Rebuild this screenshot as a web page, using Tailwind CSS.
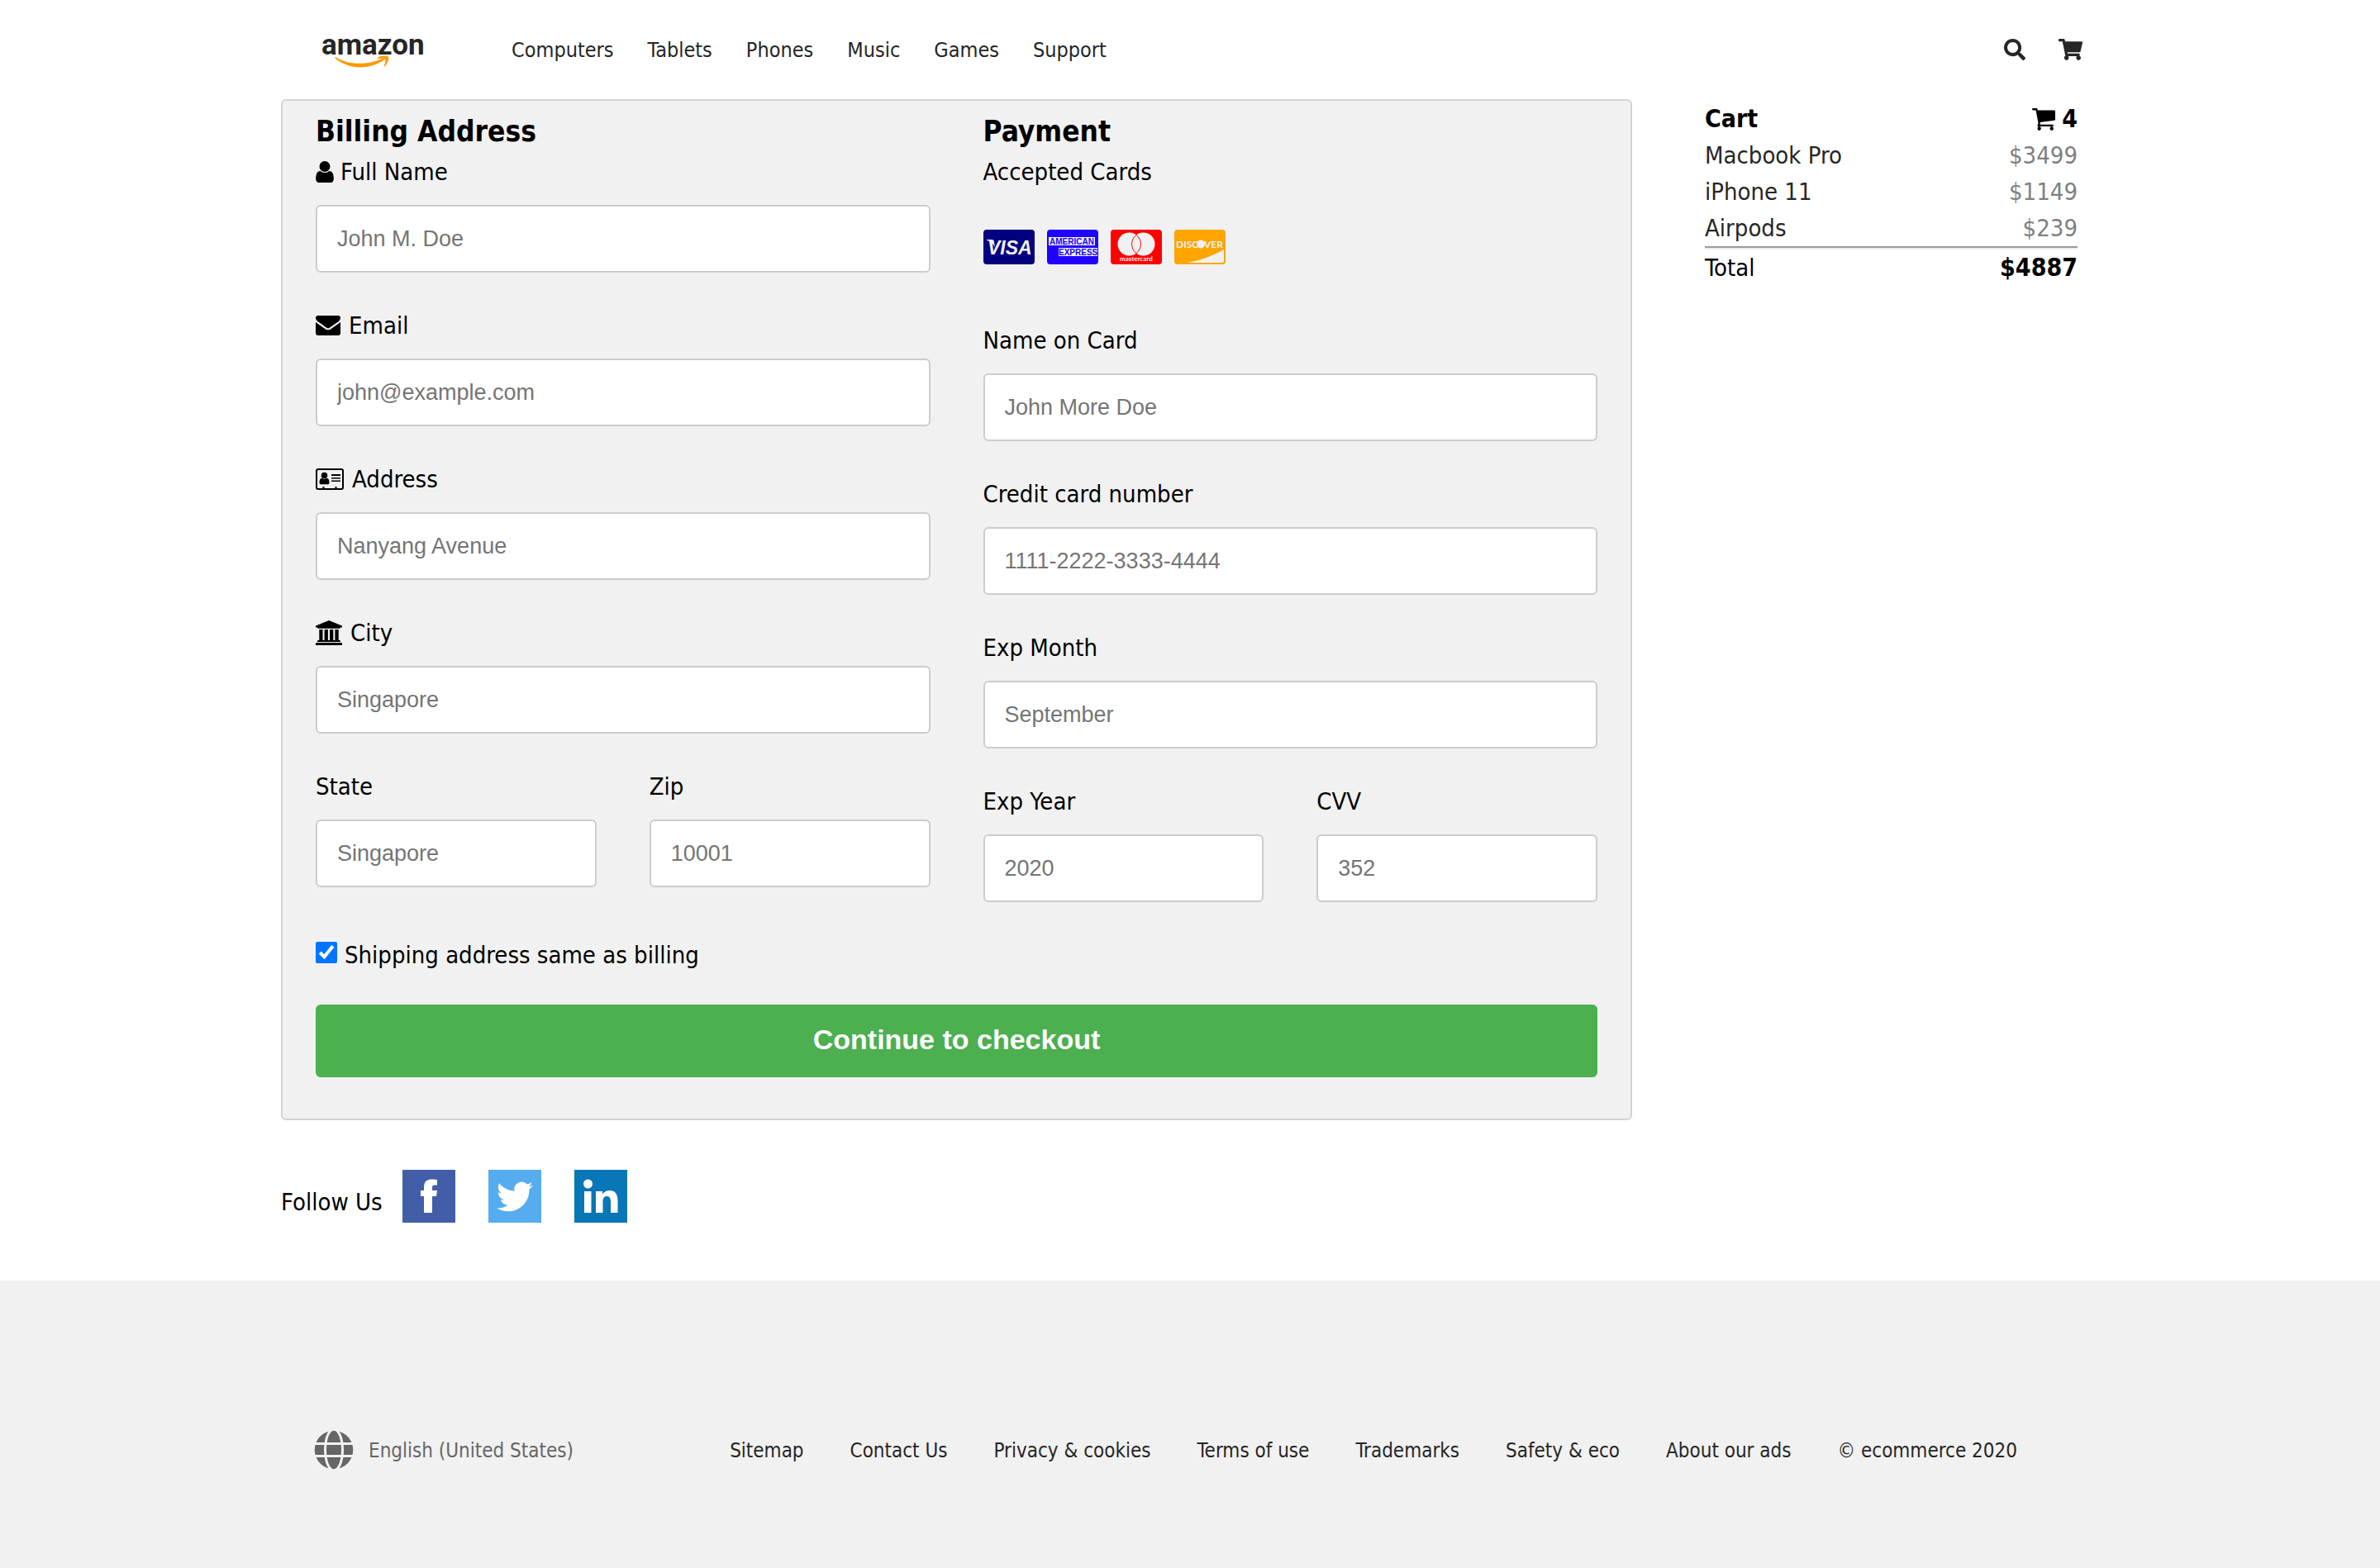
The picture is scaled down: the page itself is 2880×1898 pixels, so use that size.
<!DOCTYPE html>
<html lang="en">
<head>
<meta charset="utf-8">
<meta name="viewport" content="width=device-width, initial-scale=1">
<title>Checkout</title>
<script src="https://cdn.jsdelivr.net/npm/@tailwindcss/browser@4"></script>
</head>
<body class="flex min-h-screen flex-col bg-white font-['DejaVu_Sans_Condensed','Noto_Sans',sans-serif] text-[29px] leading-10 text-black">

<header class="mx-auto flex h-[120px] w-full max-w-[2200px] items-center pr-5 pl-12 text-[25px] text-[#262626]">
  <a href="#" aria-label="amazon" class="mr-[103px]">
    <svg class="h-[60px] w-32" viewBox="0 0 128 60">
      <text x="1" y="36" font-family="Roboto, sans-serif" font-weight="700" font-size="35" fill="#262626">amazon</text>
      <path d="M18 39C31 48 54 50 75 41c2-1 3 1 1 2C58 55 34 54 18 41c-1-1-1-2 0-2z" fill="#f90"/>
      <path d="M69 40c4-3 11-3 13-1 1 2-1 8-4 11-1 1-2 0-1-1 1-2 2-6 1-7-1-2-5-1-8-1-2 0-2 0-1-1z" fill="#f90"/>
    </svg>
  </a>
  <nav class="flex gap-[41px] pt-0.5">
    <a href="#">Computers</a>
    <a href="#">Tablets</a>
    <a href="#">Phones</a>
    <a href="#">Music</a>
    <a href="#">Games</a>
    <a href="#">Support</a>
  </nav>
  <div class="ml-auto flex items-center gap-10">
    <button type="button" aria-label="Search">
      <svg class="size-[26px]" viewBox="0 0 512 512" fill="currentColor"><path d="M505 442.700L405.300 343c-4.500-4.500-10.600-7-17-7H372c27.600-35.300 44-79.700 44-128C416 93.100 322.900 0 208 0S0 93.100 0 208s93.100 208 208 208c48.300 0 92.700-16.400 128-44v16.300c0 6.400 2.500 12.500 7 17l99.700 99.700c9.400 9.400 24.600 9.400 33.900 0l28.300-28.300c9.400-9.400 9.400-24.600.1-34zM208 336c-70.700 0-128-57.200-128-128 0-70.700 57.200-128 128-128 70.700 0 128 57.200 128 128 0 70.700-57.200 128-128 128z"/></svg>
    </button>
    <a href="#" aria-label="Shopping cart">
      <svg class="h-[26px] w-[29px]" viewBox="0 0 576 512" fill="currentColor"><path d="M528.120 301.319l47.273-208C578.806 78.301 567.391 64 551.990 64H159.208l-9.166-44.810C147.758 8.021 137.930 0 126.529 0H24C10.745 0 0 10.745 0 24v16c0 13.255 10.745 24 24 24h69.883l70.248 343.435C147.325 417.100 136 435.222 136 456c0 30.928 25.072 56 56 56s56-25.072 56-56c0-15.674-6.447-29.835-16.824-40h209.647C430.447 426.165 424 440.326 424 456c0 30.928 25.072 56 56 56s56-25.072 56-56c0-22.172-12.888-41.332-31.579-50.405l5.517-24.276c3.413-15.018-8.002-29.319-23.403-29.319H218.117l-6.545-32h293.145c11.206 0 20.920-7.754 23.403-18.681z"/></svg>
    </a>
  </div>
</header>

<main class="mx-auto w-full max-w-[2200px]">
  <div class="flex items-start gap-[88px] pr-[26px]">
    <form class="flex-1 rounded-md border-2 border-[#d3d3d3] bg-[#f1f1f1] px-10 pt-3 pb-[50px]">
      <div class="grid grid-cols-2 gap-x-16">
        <section>
          <h3 class="mb-1 text-[35px] leading-[50px] font-bold">Billing Address</h3>
          <label for="fname" class="mb-5 flex items-center gap-2">
            <svg class="h-[26px] w-[22px]" viewBox="256 128 1280 1536"><path d="M1536 1399q0 109-62.500 187t-150.500 78h-854q-88 0-150.500-78t-62.500-187q0-85 8.500-160.500t31.500-152 58.500-131 94-89 134.500-34.500q131 128 313 128t313-128q76 0 134.500 34.500t94 89 58.500 131 31.500 152 8.500 160.500zm-256-887q0 159-112.500 271.500t-271.500 112.500-271.500-112.500-112.500-271.500 112.500-271.500 271.500-112.500 271.500 112.500 112.500 271.500z"/></svg>
            Full Name
          </label>
          <input id="fname" type="text" placeholder="John M. Doe" class="mb-11 block h-[82px] w-full rounded-md border-2 border-[#ccc] bg-white px-6 font-['Liberation_Sans',sans-serif] text-[27px] placeholder:text-[#757575]">

          <label for="email" class="mb-5 flex items-center gap-[10px]">
            <svg class="h-6 w-[30px]" viewBox="0 256 1792 1408" preserveAspectRatio="none"><path d="M1792 710v794q0 66-47 113t-113 47h-1472q-66 0-113-47t-47-113v-794q44 49 101 87 362 246 497 345 57 42 92.500 65.500t94.500 48 110 24.500h2q51 0 110-24.500t94.500-48 92.500-65.500q170-123 498-345 57-39 100-87zm0-294q0 79-49 151t-122 123q-376 261-468 325-10 7-42.500 31t-54 38.500-52 32.500-57.500 27-50 9h-2q-23 0-50-9t-57.500-27-52-32.500-54-38.500-42.500-31q-91-64-262-182.500t-205-142.500q-62-42-117-115.500t-55-136.500q0-78 41.500-130t118.500-52h1472q65 0 112.500 47t47.500 113z"/></svg>
            Email
          </label>
          <input id="email" type="email" placeholder="john@example.com" class="mb-11 block h-[82px] w-full rounded-md border-2 border-[#ccc] bg-white px-6 font-['Liberation_Sans',sans-serif] text-[27px] placeholder:text-[#757575]">

          <label for="adr" class="mb-5 flex items-center gap-[10px]">
            <svg class="h-[26px] w-[34px]" viewBox="0 0 34 26">
              <rect x="1" y="1" width="32" height="24" rx="2" fill="none" stroke="#000" stroke-width="2"/>
              <circle cx="10.500" cy="8.500" r="3.800"/>
              <path d="M4.500 17c0-3 1-5.300 3.200-5.300 1.700 1.400 3.900 1.400 5.600 0 2.200 0 3.200 2.300 3.200 5.300 0 1.500-.8 2.300-2 2.300h-8c-1.200 0-2-.8-2-2.300zM19 7h11v2H19zM19 11h11v1.500H19zM19 14.500h11v1.500H19zM8.500 22h2v3h-2zM23.500 22h2v3h-2z"/>
            </svg>
            Address
          </label>
          <input id="adr" type="text" placeholder="Nanyang Avenue" class="mb-11 block h-[82px] w-full rounded-md border-2 border-[#ccc] bg-white px-6 font-['Liberation_Sans',sans-serif] text-[27px] placeholder:text-[#757575]">

          <label for="city" class="mb-5 flex items-center gap-[10px]">
            <svg class="h-[30px] w-8" viewBox="0 0 32 30"><path d="M16 0l16 6.500v2h-2c0 .7-.5 1.200-1.200 1.200H3.200C2.500 9.700 2 9.200 2 8.500H0v-2zM4.300 11h4.200v13h2.100V11h4.300v13H17V11h4.300v13h2.100V11h4.300v13h1c.7 0 1.200.5 1.200 1.100V26H2v-.9C2 24.500 2.500 24 3.200 24h1.100zM1.200 27h29.600c.7 0 1.200.5 1.200 1.100V30H0v-1.900C0 27.500.5 27 1.200 27z"/></svg>
            City
          </label>
          <input id="city" type="text" placeholder="Singapore" class="mb-11 block h-[82px] w-full rounded-md border-2 border-[#ccc] bg-white px-6 font-['Liberation_Sans',sans-serif] text-[27px] placeholder:text-[#757575]">

          <div class="grid grid-cols-2 gap-x-16">
            <div>
              <label for="state" class="mb-5 block">State</label>
              <input id="state" type="text" placeholder="Singapore" class="block h-[82px] w-full rounded-md border-2 border-[#ccc] bg-white px-6 font-['Liberation_Sans',sans-serif] text-[27px] placeholder:text-[#757575]">
            </div>
            <div>
              <label for="zip" class="mb-5 block">Zip</label>
              <input id="zip" type="text" placeholder="10001" class="block h-[82px] w-full rounded-md border-2 border-[#ccc] bg-white px-6 font-['Liberation_Sans',sans-serif] text-[27px] placeholder:text-[#757575]">
            </div>
          </div>
        </section>

        <section>
          <h3 class="mb-1 text-[35px] leading-[50px] font-bold">Payment</h3>
          <p>Accepted Cards</p>
          <div class="mt-[50px] mb-[72px] flex gap-[15px]">
            <svg class="h-[42px] w-[62px]" viewBox="0 0 62 42" role="img" aria-label="Visa">
              <rect width="62" height="42" rx="4" fill="navy"/>
              <text x="5" y="30" font-family="Liberation Sans, sans-serif" font-weight="700" font-style="italic" font-size="23" fill="#f1f1f1">VISA</text>
              <path d="M3 12h7c2 0 3 1 3 3l1 6c-2-4-6-7-11-9z" fill="#f1f1f1"/>
            </svg>
            <svg class="h-[42px] w-[62px]" viewBox="0 0 62 42" role="img" aria-label="American Express">
              <rect width="62" height="42" rx="4" fill="#2000ff"/>
              <path d="M2 9h56v10H2zM14 22h47v10H14z" fill="#f1f1f1"/>
              <g font-family="Liberation Sans, sans-serif" font-weight="700" font-size="10" fill="#2000ff">
                <text x="3" y="18">AMERICAN</text>
                <text x="14" y="31">EXPRESS</text>
              </g>
            </svg>
            <svg class="h-[42px] w-[62px]" viewBox="0 0 62 42" role="img" aria-label="Mastercard">
              <rect width="62" height="42" rx="4" fill="red"/>
              <circle cx="22.500" cy="17.500" r="14" fill="#f1f1f1"/>
              <circle cx="39.500" cy="17.500" r="14" fill="#f1f1f1"/>
              <path d="M31 6.400a14 14 0 010 22.200a14 14 0 010-22.200z" fill="#f1f1f1" stroke="red"/>
              <text x="11" y="38" font-family="Lato, sans-serif" font-weight="700" font-size="8" fill="#f1f1f1">mastercard</text>
            </svg>
            <svg class="h-[42px] w-[62px]" viewBox="0 0 62 42" role="img" aria-label="Discover">
              <rect width="62" height="42" rx="4" fill="orange"/>
              <g font-family="Lato, sans-serif" font-weight="700" font-size="12" fill="#f1f1f1">
                <text x="2" y="22">DISC</text>
                <text x="36" y="22">VER</text>
              </g>
              <circle cx="32" cy="17.500" r="5" fill="#f1f1f1"/>
              <path d="M16 40c17-3 32-9 44-16v14c0 1-1 2-2 2z" fill="#f1f1f1"/>
            </svg>
          </div>

          <label for="cname" class="mb-5 block">Name on Card</label>
          <input id="cname" type="text" placeholder="John More Doe" class="mb-11 block h-[82px] w-full rounded-md border-2 border-[#ccc] bg-white px-6 font-['Liberation_Sans',sans-serif] text-[27px] placeholder:text-[#757575]">

          <label for="ccnum" class="mb-5 block">Credit card number</label>
          <input id="ccnum" type="text" placeholder="1111-2222-3333-4444" class="mb-11 block h-[82px] w-full rounded-md border-2 border-[#ccc] bg-white px-6 font-['Liberation_Sans',sans-serif] text-[27px] placeholder:text-[#757575]">

          <label for="expmonth" class="mb-5 block">Exp Month</label>
          <input id="expmonth" type="text" placeholder="September" class="mb-11 block h-[82px] w-full rounded-md border-2 border-[#ccc] bg-white px-6 font-['Liberation_Sans',sans-serif] text-[27px] placeholder:text-[#757575]">

          <div class="grid grid-cols-2 gap-x-16">
            <div>
              <label for="expyear" class="mb-5 block">Exp Year</label>
              <input id="expyear" type="text" placeholder="2020" class="block h-[82px] w-full rounded-md border-2 border-[#ccc] bg-white px-6 font-['Liberation_Sans',sans-serif] text-[27px] placeholder:text-[#757575]">
            </div>
            <div>
              <label for="cvv" class="mb-5 block">CVV</label>
              <input id="cvv" type="text" placeholder="352" class="block h-[82px] w-full rounded-md border-2 border-[#ccc] bg-white px-6 font-['Liberation_Sans',sans-serif] text-[27px] placeholder:text-[#757575]">
            </div>
          </div>
        </section>
      </div>

      <label class="mt-11 flex items-start gap-[9px]">
        <input type="checkbox" checked class="mt-1 size-[26px] accent-[#0075ff]">
        Shipping address same as billing
      </label>
      <button type="submit" class="mt-10 h-[88px] w-full rounded-md bg-[#4caf50] pb-1 font-['Liberation_Sans',sans-serif] text-[34px] font-bold text-white">Continue to checkout</button>
    </form>

    <aside class="w-[451px] pt-0.5 leading-[44px]">
      <h4 class="flex items-center justify-between text-[30px] font-bold">
        Cart
        <span class="flex items-center gap-2">
          <svg class="h-[27px] w-[29px]" viewBox="0 256 1728 1408" preserveAspectRatio="none"><path d="M704 1536q0 52-38 90t-90 38-90-38-38-90 38-90 90-38 90 38 38 90zm896 0q0 52-38 90t-90 38-90-38-38-90 38-90 90-38 90 38 38 90zm128-1088v512q0 24-16.500 42.500t-40.500 21.500l-1044 122q13 60 13 70 0 16-24 64h920q26 0 45 19t19 45-19 45-45 19h-1024q-26 0-45-19t-19-45q0-11 8-31.500t16-36 21.500-40 15.500-29.500l-177-823h-204q-26 0-45-19t-19-45 19-45 45-19h256q16 0 28.500 6.500t19.500 15.500 13 24.500 8 26 5.500 29.500 4.500 26h1201q26 0 45 19t19 45z"/></svg>
          4
        </span>
      </h4>
      <ul>
        <li class="flex justify-between"><a href="#" class="text-[#262626]">Macbook Pro</a><span class="text-[#808080]">$3499</span></li>
        <li class="flex justify-between"><a href="#" class="text-[#262626]">iPhone 11</a><span class="text-[#808080]">$1149</span></li>
        <li class="flex justify-between"><a href="#" class="text-[#262626]">Airpods</a><span class="text-[#808080]">$239</span></li>
      </ul>
      <hr class="h-1 border-t-2 border-b-2 border-t-[#9a9a9a] border-b-[#eee]">
      <p class="flex justify-between">Total <b class="text-[30px]">$4887</b></p>
    </aside>
  </div>

  <div class="mt-[60px] mb-[70px] flex h-16 items-center gap-10">
    <span class="-mr-4 pt-3.5">Follow Us</span>
    <a href="#" aria-label="Facebook">
      <svg class="size-16" viewBox="0 0 64 64"><rect width="64" height="64" fill="#435ea9"/><path d="M26 52V32h-4v-7h4v-4c0-6 3-9.500 9-9.500 3 0 5 .2 7 .5v6.500h-3.500C36.500 18.500 36 20 36 22v3h6l-1 7h-5v20z" fill="#fff"/></svg>
    </a>
    <a href="#" aria-label="Twitter">
      <svg class="size-16" viewBox="0 0 64 64"><rect width="64" height="64" fill="#55acee"/><path transform="translate(10 10.500) scale(1.830)" d="M23.953 4.570a10 10 0 01-2.825.775 4.958 4.958 0 002.163-2.723c-.951.555-2.005.959-3.127 1.184a4.920 4.920 0 00-8.384 4.482C7.690 8.095 4.067 6.130 1.640 3.162a4.822 4.822 0 00-.666 2.475c0 1.710.870 3.213 2.188 4.096a4.904 4.904 0 01-2.228-.616v.060a4.923 4.923 0 003.946 4.827 4.996 4.996 0 01-2.212.085 4.936 4.936 0 004.604 3.417 9.867 9.867 0 01-6.102 2.105c-.390 0-.779-.023-1.170-.067a13.995 13.995 0 007.557 2.209c9.053 0 13.998-7.496 13.998-13.985 0-.210 0-.420-.015-.630A9.935 9.935 0 0024 4.590z" fill="#fff"/></svg>
    </a>
    <a href="#" aria-label="LinkedIn">
      <svg class="size-16" viewBox="0 0 64 64"><rect width="64" height="64" fill="#0777b7"/><circle cx="16.500" cy="17" r="5.500" fill="#fff"/><path d="M12 26h8.500v26H12zM26 26h8v3.500c2-3 5-4.500 8.500-4.500 7 0 10 4.500 10 12v15h-8.500V39c0-4-1-7-4.500-7-3.500 0-5 2.500-5 6.500V52H26z" fill="#fff"/></svg>
    </a>
  </div>
</main>

<footer class="flex-1 bg-[#f1f1f1] pt-[181px] pb-20 text-2xl text-[#262626]">
  <div class="mx-auto flex w-full max-w-[2200px] items-center pl-10">
    <button type="button" class="flex items-center gap-[18px] text-[#666]">
      <svg class="size-12" viewBox="-8 0 512 512" fill="currentColor"><path d="M336.500 160C322 70.700 287.800 8 248 8s-74 62.700-88.500 152h177zM152 256c0 22.200 1.200 43.500 3.300 64h185.300c2.100-20.500 3.300-41.800 3.300-64s-1.200-43.500-3.300-64H155.300c-2.100 20.500-3.300 41.800-3.300 64zm324.700-96c-28.600-67.900-86.500-120.400-158-141.600 24.400 33.800 41.200 84.700 50 141.600h108zM177.200 18.400C105.800 39.600 47.800 92.100 19.300 160h108c8.700-56.900 25.500-107.800 49.900-141.600zM487.400 192H372.700c2.100 21 3.300 42.500 3.300 64s-1.200 43-3.300 64h114.600c5.500-20.500 8.600-41.800 8.600-64s-3.100-43.500-8.500-64zM120 256c0-21.500 1.200-43 3.300-64H8.600C3.200 212.500 0 233.800 0 256s3.200 43.500 8.600 64h114.600c-2-21-3.200-42.500-3.200-64zm39.500 96c14.500 89.300 48.700 152 88.500 152s74-62.700 88.500-152h-177zm159.300 141.600c71.400-21.200 129.400-73.700 158-141.600h-108c-8.800 56.900-25.600 107.800-50 141.600zM19.300 352c28.600 67.900 86.500 120.400 158 141.600-24.400-33.800-41.200-84.700-50-141.600h-108z"/></svg>
      <span class="pt-0.5">English (United States)</span>
    </button>
    <nav class="ml-auto flex gap-14 pt-0.5 pr-[99px]">
      <a href="#">Sitemap</a>
      <a href="#">Contact Us</a>
      <a href="#">Privacy &amp; cookies</a>
      <a href="#">Terms of use</a>
      <a href="#">Trademarks</a>
      <a href="#">Safety &amp; eco</a>
      <a href="#">About our ads</a>
      <a href="#">© ecommerce 2020</a>
    </nav>
  </div>
</footer>
</body>
</html>
